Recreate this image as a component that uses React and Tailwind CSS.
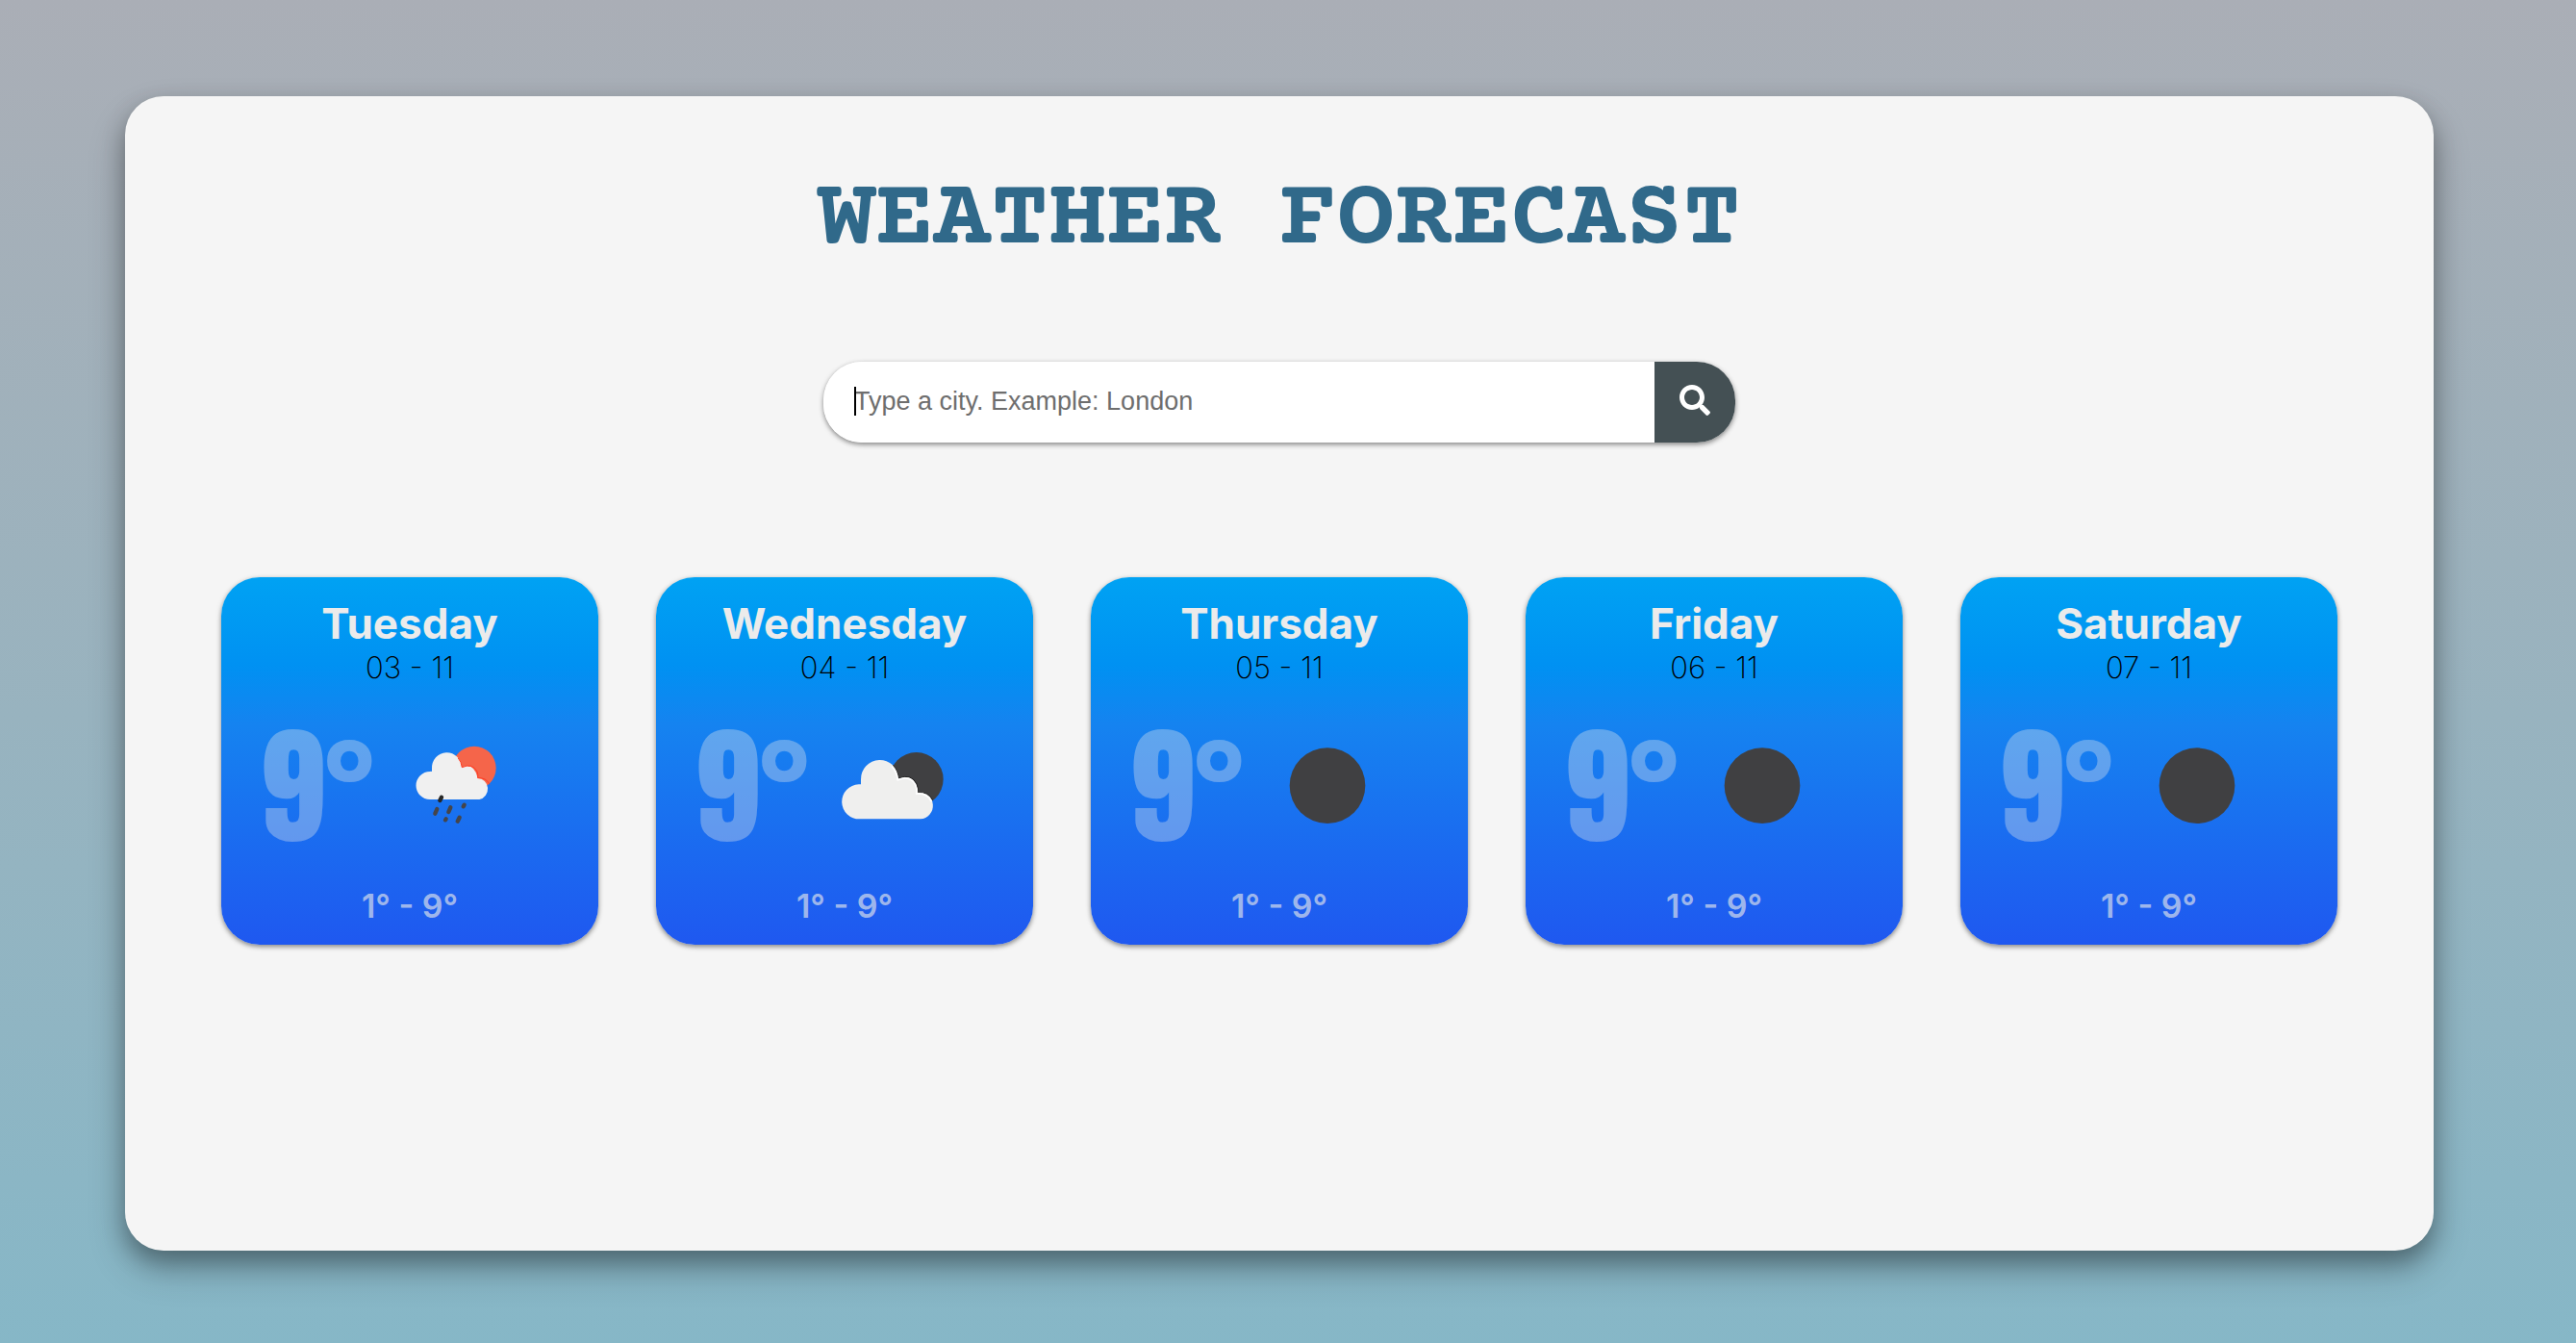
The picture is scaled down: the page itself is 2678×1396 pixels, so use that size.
import { FaSearch } from "react-icons/fa";

const days = [
  { day: "Tuesday", date: "03 - 11", icon: "rain" },
  { day: "Wednesday", date: "04 - 11", icon: "clouds" },
  { day: "Thursday", date: "05 - 11", icon: "clear" },
  { day: "Friday", date: "06 - 11", icon: "clear" },
  { day: "Saturday", date: "07 - 11", icon: "clear" },
];

const drops = [
  [177, 236, 172, 246],
  [163, 273, 157, 287],
  [205, 268, 199, 282],
  [248, 260, 245, 265],
  [191, 304, 189, 307],
  [233, 299, 227, 311],
];

function RainIcon() {
  return (
    <svg viewBox="-3 6 450 390" className="w-[150px]" role="img" aria-label="Rain">
      <circle cx="279" cy="145" r="68" fill="#f5654a" />
      <path
        d="M141 243a43 43 0 0 1 0-87q3-1 6 0v-9a46 48 0 0 1 93-4q38-17 50 33a34 34 0 0 1 5 67z"
        fill="#f0f0f0"
      />
      <path d="M229 114q10 12 12 29q32-15 47 13q4 9 2 20q26-2 37 20" fill="none" stroke="#ff3d24" strokeWidth="3" />
      {drops.map(([x1, y1, x2, y2]) => (
        <line key={`${x1}-${y1}`} x1={x1} y1={y1} x2={x2} y2={y2} stroke={y1 < 240 ? "#262626" : "#45454a"} strokeWidth="13" strokeLinecap="round" />
      ))}
    </svg>
  );
}

function CloudsIcon() {
  return (
    <svg viewBox="4 6 450 390" className="w-[150px]" role="img" aria-label="Broken clouds">
      <circle cx="309" cy="180" r="84" fill="#404042" />
      <path
        d="M132 304a54 54 0 0 1-3-108q4-1 7 0v-15a59 59 0 0 1 118-4q48-20 61 43a42 42 0 0 1 7 84z"
        fill="#efefee"
      />
      <path d="M236 136q16 17 18 41q38-16 56 17q5 12 4 27q32-3 46 24" fill="none" stroke="#242425" strokeWidth="3" />
      <path d="M232 139q16 17 19 43q38-16 55 15q6 12 4 28q32-3 46 24" fill="none" stroke="#ffffff" strokeWidth="5" />
    </svg>
  );
}

function ClearIcon() {
  return (
    <svg viewBox="0 6 450 390" className="w-[150px]" role="img" aria-label="Clear">
      <circle cx="231" cy="200" r="118" fill="#404042" />
    </svg>
  );
}

const icons = { rain: RainIcon, clouds: CloudsIcon, clear: ClearIcon };

function DayCard({ day, date, icon }) {
  const Icon = icons[icon];
  return (
    <li className="flex flex-col rounded-[40px] bg-[linear-gradient(#00a2f3,#0091f2_24%,#1583f0_40%,#1b69f0_75%,#1f58f0)] pt-5 pb-[18px] text-center shadow-[0_2px_6px_rgba(0,0,0,0.2),0_2px_4px_rgba(0,0,0,0.3)]">
      <h2 className="text-[44px] leading-14 font-bold text-[#ebebeb]">{day}</h2>
      <p className="text-[31px] leading-9 font-extralight text-black">{date}</p>
      <div className="mt-5 mb-[18px] flex h-[170px] items-center gap-2.5 pl-[41px]">
        <p className="font-['Anton','Open_Sans_Condensed',sans-serif] text-[134px] leading-[170px] text-[#ebebeb]/35">9°</p>
        <Icon />
      </div>
      <p className="text-[34px] leading-11 font-semibold text-[#ebebeb]/65">1° - 9°</p>
    </li>
  );
}

export default function App() {
  return (
    <main className="min-h-screen bg-linear-to-b from-[#aaaeb6] to-[#86b7c7] py-[100px] pr-[148px] pl-[130px] font-['Inter',sans-serif]">
      <section className="min-h-[1200px] rounded-[40px] bg-[#f5f5f5] px-[100px] pt-20 shadow-[0_20px_40px_rgba(0,0,0,0.2),0_12px_24px_rgba(0,0,0,0.3)]">
        <h1 className="text-center font-['Courier_Prime','FreeMono','Liberation_Mono',monospace] text-[100px] leading-[100px] font-bold text-[#30698a]">
          WEATHER FORECAST
        </h1>
        <form
          onSubmit={(e) => e.preventDefault()}
          className="relative mx-auto mt-24 flex h-[84px] w-full max-w-[948px] overflow-hidden rounded-[40px] bg-white shadow-[0_2px_6px_rgba(0,0,0,0.2),0_2px_4px_rgba(0,0,0,0.3)]"
        >
          <input
            type="text"
            aria-label="City"
            placeholder="Type a city. Example: London"
            className="min-w-0 flex-1 bg-white pb-0.5 pl-8 font-['Liberation_Sans',sans-serif] text-[27px] text-black outline-none placeholder:text-[#6e6e6e]"
          />
          <span aria-hidden="true" className="absolute top-[26px] left-8 h-[30px] w-0.5 bg-black" />
          <button type="submit" aria-label="Search" className="flex w-[84px] items-center justify-center bg-[#445054] pb-1 text-white">
            <FaSearch className="size-8" />
          </button>
        </form>
        <ul className="mt-[140px] grid grid-cols-5 gap-[60px]">
          {days.map((d) => (
            <DayCard key={d.day} {...d} />
          ))}
        </ul>
      </section>
    </main>
  );
}
